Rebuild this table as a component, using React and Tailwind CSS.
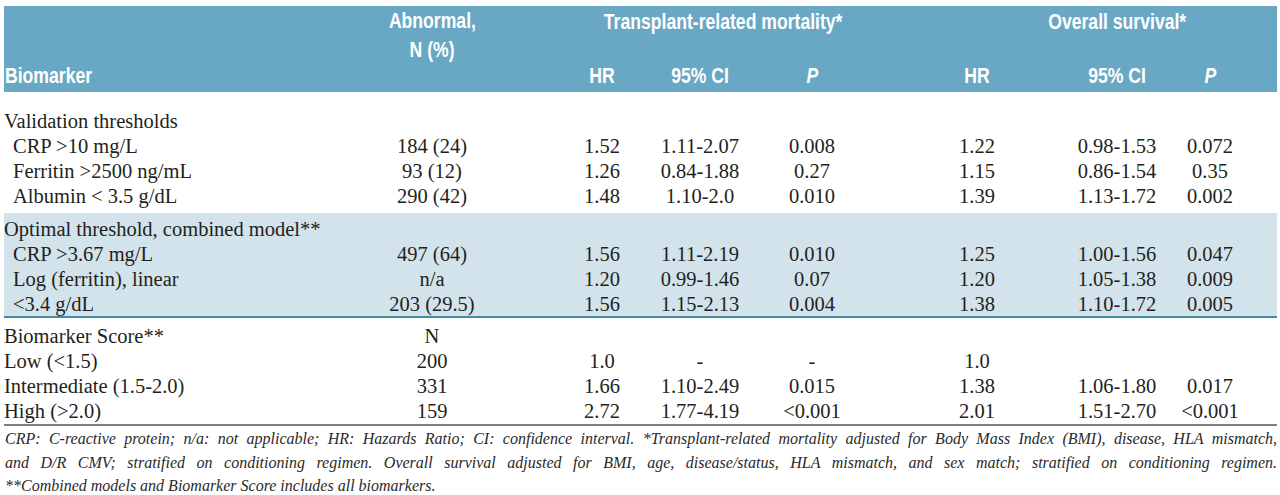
import React from "react";

const GRID =
  "grid grid-cols-[368px_120px_70px_80px_116px_108px_71px_80px_40px_120px_66px_34px]";

const CELL = [
  "col-start-2 text-center",
  "col-start-4 text-center",
  "col-start-5 text-center",
  "col-start-6 text-center",
  "col-start-8 text-center",
  "col-start-10 text-center",
  "col-start-11 text-center",
];

function Row({ label, indent, vals = [] }) {
  return (
    <div className={`${GRID} h-[25px] items-center`}>
      <div
        className={`col-start-1 row-start-1 whitespace-nowrap ${indent ? "pl-[9px]" : ""}`}
      >
        {label}
      </div>
      {vals.map((v, i) =>
        v === null ? null : (
          <div key={i} className={`${CELL[i]} row-start-1 whitespace-nowrap`}>
            {v}
          </div>
        )
      )}
    </div>
  );
}

function H({ children, className = "" }) {
  return (
    <span className={`inline-block whitespace-nowrap scale-x-[0.8] ${className}`}>
      {children}
    </span>
  );
}

export default function App() {
  return (
    <div className="w-[1280px] h-[495px] bg-white pt-[6px] pl-[4px] pr-[3px] overflow-hidden font-['Liberation_Serif',serif] text-[20.5px] text-[#231f20]">
      {/* Header */}
      <div
        className={`${GRID} grid-rows-[27px_27px_27px] h-[86px] pt-[2px] items-center bg-[#69a8c4] text-white font-bold text-[22px] leading-none font-['Liberation_Sans',sans-serif]`}
      >
        <div className="col-start-2 row-start-1 row-span-2 flex flex-col items-center gap-[7px] text-center whitespace-nowrap">
          <H>Abnormal,</H>
          <H>N (%)</H>
        </div>
        <div className="col-start-4 col-span-3 row-start-1 flex justify-center pl-[18px]">
          <H>Transplant-related mortality*</H>
        </div>
        <div className="col-start-10 row-start-1 flex justify-center">
          <H>Overall survival*</H>
        </div>
        <div className="col-start-1 row-start-3 pl-[1px]">
          <H className="origin-left">Biomarker</H>
        </div>
        <div className="col-start-4 row-start-3 flex justify-center"><H>HR</H></div>
        <div className="col-start-5 row-start-3 flex justify-center"><H>95% CI</H></div>
        <div className="col-start-6 row-start-3 flex justify-center"><H className="italic">P</H></div>
        <div className="col-start-8 row-start-3 flex justify-center"><H>HR</H></div>
        <div className="col-start-10 row-start-3 flex justify-center"><H>95% CI</H></div>
        <div className="col-start-11 row-start-3 flex justify-center"><H className="italic">P</H></div>
      </div>

      {/* Validation thresholds */}
      <div className="pt-[14px] pb-[7px]">
        <Row label="Validation thresholds" />
        <Row
          indent
          label="CRP >10 mg/L"
          vals={["184 (24)", "1.52", "1.11-2.07", "0.008", "1.22", "0.98-1.53", "0.072"]}
        />
        <Row
          indent
          label="Ferritin >2500 ng/mL"
          vals={["93 (12)", "1.26", "0.84-1.88", "0.27", "1.15", "0.86-1.54", "0.35"]}
        />
        <Row
          indent
          label="Albumin < 3.5 g/dL"
          vals={["290 (42)", "1.48", "1.10-2.0", "0.010", "1.39", "1.13-1.72", "0.002"]}
        />
      </div>

      {/* Optimal threshold band */}
      <div className="bg-[#d3e3ec] pt-[1px] pb-[2px] border-b-2 border-[#3f8fa9]">
        <Row label="Optimal threshold, combined model**" />
        <Row
          indent
          label="CRP >3.67 mg/L"
          vals={["497 (64)", "1.56", "1.11-2.19", "0.010", "1.25", "1.00-1.56", "0.047"]}
        />
        <Row
          indent
          label="Log (ferritin), linear"
          vals={["n/a", "1.20", "0.99-1.46", "0.07", "1.20", "1.05-1.38", "0.009"]}
        />
        <Row
          indent
          label="<3.4 g/dL"
          vals={["203 (29.5)", "1.56", "1.15-2.13", "0.004", "1.38", "1.10-1.72", "0.005"]}
        />
      </div>

      {/* Biomarker score */}
      <div className="pt-[3px] pb-[3px] border-b-2 border-[#808080]">
        <Row label="Biomarker Score**" vals={["N"]} />
        <Row label="Low (<1.5)" vals={["200", "1.0", "-", "-", "1.0", null, null]} />
        <Row
          label="Intermediate (1.5-2.0)"
          vals={["331", "1.66", "1.10-2.49", "0.015", "1.38", "1.06-1.80", "0.017"]}
        />
        <Row
          label="High (>2.0)"
          vals={["159", "2.72", "1.77-4.19", "<0.001", "2.01", "1.51-2.70", "<0.001"]}
        />
      </div>

      {/* Footnote */}
      <div className="pt-[1px] pl-[1px] italic text-[16px] leading-[23.5px] text-[#2a2a2a]">
        <div className="text-justify [text-align-last:justify]">
          CRP: C-reactive protein; n/a: not applicable; HR: Hazards Ratio; CI: confidence interval. *Transplant-related mortality adjusted for Body Mass Index (BMI), disease, HLA mismatch,
        </div>
        <div className="text-justify [text-align-last:justify]">
          and D/R CMV; stratified on conditioning regimen. Overall survival adjusted for BMI, age, disease/status, HLA mismatch, and sex match; stratified on conditioning regimen.
        </div>
        <div>**Combined models and Biomarker Score includes all biomarkers.</div>
      </div>
    </div>
  );
}
